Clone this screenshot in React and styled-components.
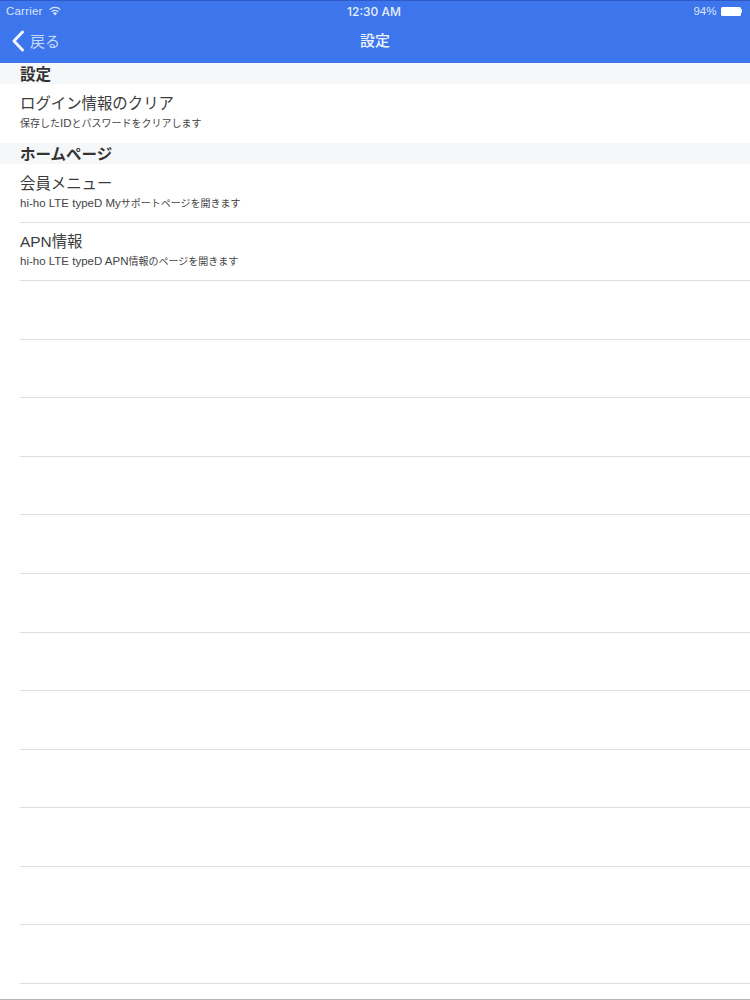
import React from 'react'
import styled, { createGlobalStyle } from 'styled-components'

const FONT = `"Liberation Sans", "Noto Sans CJK JP", sans-serif`

function WifiIcon() {
    return (
        <svg width="14" height="10" viewBox="0 0 14 10">
            <path d="M7 9.6 L4.9 7.2 A3.2 3.2 0 0 1 9.1 7.2 Z" fill="#dbe6fb" />
            <path d="M3.6 5.8 A5 5 0 0 1 10.4 5.8" fill="none" stroke="#dbe6fb" strokeWidth="1.3" />
            <path d="M1.6 3.6 A7.8 7.8 0 0 1 12.4 3.6" fill="none" stroke="#dbe6fb" strokeWidth="1.3" />
        </svg>
    )
}

function BackIcon() {
    return (
        <svg width="14" height="22" viewBox="0 0 14 22">
            <path d="M11.5 2 L3 11 L11.5 20" fill="none" stroke="#f1f5fe" strokeWidth="3" strokeLinecap="round" strokeLinejoin="round" />
        </svg>
    )
}

function App() {
    const emptyRows = Array.from({ length: 12 })
    return (
        <Page>
            <GlobalStyle />
            <NavBar>
                <StatusBar>
                    <StatusLeft>Carrier <WifiIcon /></StatusLeft>
                    <Clock>12:30 AM</Clock>
                    <StatusRight>
                        94%
                        <Battery />
                        <BatteryTip />
                    </StatusRight>
                </StatusBar>
                <TitleBar>
                    <BackLink><BackIcon /><BackText>戻る</BackText></BackLink>
                    <Title>設定</Title>
                </TitleBar>
            </NavBar>

            <SectionHeader>設定</SectionHeader>
            <Row last>
                <RowTitle>ログイン情報のクリア</RowTitle>
                <RowSub>保存した<Latin>ID</Latin>とパスワードをクリアします</RowSub>
            </Row>

            <SectionHeader>ホームページ</SectionHeader>
            <Row>
                <RowTitle>会員メニュー</RowTitle>
                <RowSub><Latin>hi-ho LTE typeD My</Latin>サポートページを開きます</RowSub>
            </Row>
            <Row>
                <RowTitle>APN情報</RowTitle>
                <RowSub><Latin>hi-ho LTE typeD APN</Latin>情報のページを開きます</RowSub>
            </Row>
            {emptyRows.map((_, i) => <Row key={i} />)}
            <BottomEdge />
        </Page>
    )
}

const GlobalStyle = createGlobalStyle`
    html, body {
        margin: 0;
        background: #fff;
    }
    * {
        box-sizing: border-box;
    }
`
const Page = styled.div`
    position: relative;
    width: 750px;
    height: 1000px;
    overflow: hidden;
    background: #fff;
    font-family: ${FONT};
    color: #2b2b2b;
`
const NavBar = styled.header`
    height: 63px;
    background: #3d75ec;
    border-top: 1px solid #2f5bc9;
    color: #fff;
`
const StatusBar = styled.div`
    display: grid;
    grid-template-columns: 1fr auto 1fr;
    align-items: center;
    height: 20px;
    padding: 0 8px 0 6px;
    font-size: 11.5px;
    color: #dbe6fb;
`
const StatusLeft = styled.div`
    display: flex;
    align-items: center;
    gap: 5px;
    letter-spacing: 0.2px;
`
const Clock = styled.div`
    font-family: "Inter", sans-serif;
    font-size: 12px;
    font-weight: 500;
    color: #e6eefd;
`
const StatusRight = styled.div`
    display: flex;
    align-items: center;
    justify-content: flex-end;
`
const Battery = styled.div`
    width: 20px;
    height: 9px;
    margin-left: 4px;
    background: #fff;
    border-radius: 1.5px;
`
const BatteryTip = styled.div`
    width: 1.5px;
    height: 4px;
    background: #dbe6fb;
`
const TitleBar = styled.div`
    position: relative;
    display: flex;
    align-items: center;
    justify-content: center;
    height: 40px;
    padding-bottom: 3px;
`
const BackLink = styled.div`
    position: absolute;
    left: 11px;
    top: 9px;
    display: flex;
    align-items: center;
    gap: 5px;
    font-size: 15px;
    color: #c9daf9;
`
const BackText = styled.span`
    margin-top: -2px;
`
const Title = styled.div`
    font-size: 15px;
    font-weight: 500;
    color: #f1f5fe;
`
const SectionHeader = styled.div`
    height: 21.3px;
    padding-left: 20px;
    padding-top: 1px;
    background: #f6f7f8;
    font-size: 15.5px;
    line-height: 21px;
    font-weight: 700;
    color: #333;
`
const Row = styled.div`
    height: 58.55px;
    margin-left: 20px;
    padding-top: 8.6px;
    border-bottom: ${props => props.last ? 'none' : '1.2px solid #dedede'};
`
const RowTitle = styled.div`
    font-size: 15.4px;
    line-height: 22px;
    color: #3c3c3c;
`
const RowSub = styled.div`
    margin-top: 1px;
    font-size: 10px;
    line-height: 14px;
    color: #444;
`
const Latin = styled.span`
    font-size: 11.5px;
`
const BottomEdge = styled.div`
    position: absolute;
    left: 0;
    right: 0;
    bottom: 0;
    height: 1px;
    background: #b5b5b5;
`

export default App
